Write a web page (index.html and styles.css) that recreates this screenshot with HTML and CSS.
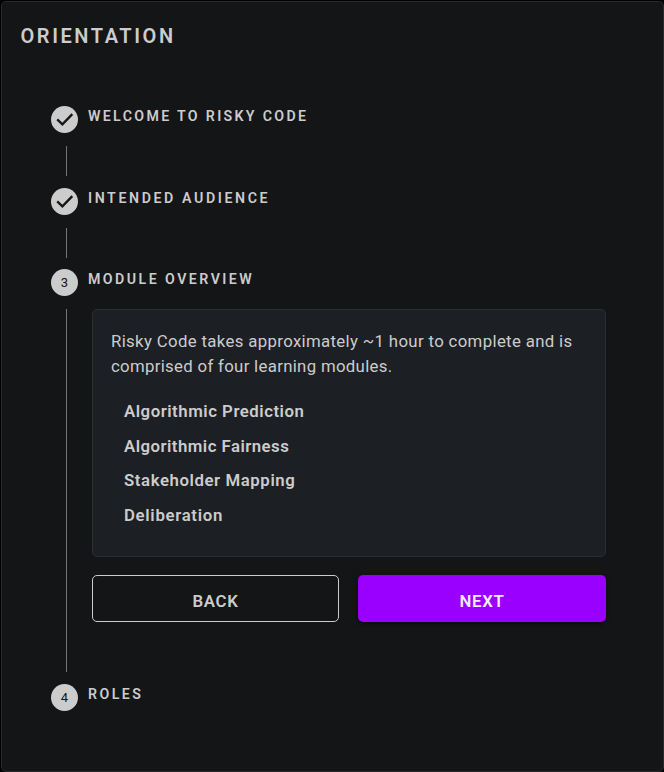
FILE: index.html
```html
<!DOCTYPE html>
<html lang="en">
<head>
<meta charset="utf-8">
<title>Orientation</title>
<link rel="stylesheet" href="styles.css">
</head>
<body>
<main class="card">
  <h1 class="title">ORIENTATION</h1>
  <section class="stepper">
    <div class="step">
      <span class="badge"><svg viewBox="0 0 27 27"><path d="M6.2 13.3 11.4 18.3 21.3 8.1"/></svg></span>
      <h2 class="label welcome">WELCOME TO RISKY CODE</h2>
    </div>
    <div class="connector"></div>
    <div class="step">
      <span class="badge"><svg viewBox="0 0 27 27"><path d="M6.2 13.3 11.4 18.3 21.3 8.1"/></svg></span>
      <h2 class="label intended">INTENDED AUDIENCE</h2>
    </div>
    <div class="connector second"></div>
    <div class="step">
      <span class="badge">3</span>
      <h2 class="label module">MODULE OVERVIEW</h2>
    </div>
    <div class="content">
      <div class="panel">
        <p class="intro"><span class="line-one">Risky Code takes approximately ~1 hour to complete and is</span><br><span class="line-two">comprised of four learning modules.</span></p>
        <ul class="modules">
          <li class="prediction">Algorithmic Prediction</li>
          <li class="fairness">Algorithmic Fairness</li>
          <li class="mapping">Stakeholder Mapping</li>
          <li class="deliberation">Deliberation</li>
        </ul>
      </div>
      <div class="actions">
        <button class="button back">BACK</button>
        <button class="button next">NEXT</button>
      </div>
    </div>
    <div class="step">
      <span class="badge">4</span>
      <h2 class="label roles">ROLES</h2>
    </div>
  </section>
</main>
</body>
</html>
```
FILE: styles.css
```css
* { box-sizing: border-box; }
body {
  margin: 0;
  padding: 1px 0 0 1px;
  height: 772px;
  overflow: hidden;
  background: #000;
  color: #ccc;
  font-family: Roboto, "Noto Sans", sans-serif;
}
.card {
  height: 771px;
  border: 1px solid #292a2c;
  border-radius: 5px;
  background: #141517;
}
h1, h2, p, ul { margin: 0; padding: 0; }
.title {
  height: 104px;
  padding: 19px 0 0 18.5px;
  font-size: 20px;
  line-height: 30px;
  font-weight: 600;
  letter-spacing: 2.57px;
}
.stepper { padding-left: 49px; }
.step { display: flex; gap: 10px; height: 27px; }
.badge {
  flex: none;
  width: 27px;
  height: 27px;
  border-radius: 50%;
  background: #ccc;
  color: #141517;
  font-size: 13px;
  line-height: 28px;
  text-align: center;
}
.badge svg { display: block; width: 27px; height: 27px; }
.badge path { fill: none; stroke: #141517; stroke-width: 2.3; }
.label {
  font-size: 14.2px;
  line-height: 20px;
  font-weight: 600;
  white-space: nowrap;
}
.welcome { letter-spacing: 2.33px; }
.intended { letter-spacing: 2.6px; }
.module { letter-spacing: 2.45px; }
.roles { letter-spacing: 2.45px; }
.connector {
  width: 1px;
  height: 30px;
  margin: 13px 0 12px 15px;
  background: #757575;
}
.connector.second { margin-bottom: 11px; }
.content {
  width: 540px;
  height: 363px;
  margin: 13px 0 12px 15px;
  padding-left: 25px;
  border-left: 1px solid #757575;
}
.panel {
  height: 248px;
  padding: 19px 18px;
  border: 1px solid #2b2e32;
  border-radius: 5px;
  background: #1c1f24;
}
.intro { font-size: 16.8px; line-height: 25px; white-space: nowrap; }
.line-one { letter-spacing: .345px; }
.line-two { letter-spacing: .31px; }
.modules {
  margin: 15px 0 0 13px;
  list-style: none;
  font-size: 16.8px;
  line-height: 34.6px;
  font-weight: 600;
}
.prediction { letter-spacing: .52px; }
.fairness { letter-spacing: .47px; }
.mapping { letter-spacing: .58px; }
.deliberation { letter-spacing: .68px; }
.actions {
  display: grid;
  grid-template-columns: 247px 248px;
  gap: 19px;
  margin-top: 18px;
}
.button {
  height: 47px;
  padding: 5px 0 0;
  border: 0;
  border-radius: 5px;
  font: 600 16.8px Roboto, "Noto Sans", sans-serif;
  letter-spacing: .7px;
}
.back { border: 1px solid #ccc; background: transparent; color: #ccc; }
.next { background: #90f; color: #f5eaff; box-shadow: 0 2px 4px rgba(0, 0, 0, .5); }
```
